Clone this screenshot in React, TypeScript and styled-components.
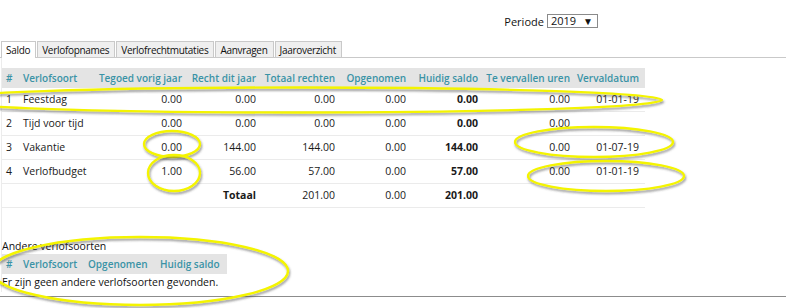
import React from "react";
import styled, { createGlobalStyle } from "styled-components";

const Global = createGlobalStyle`
  html, body { margin: 0; padding: 0; background: #fff; }
  body { font-family: "Open Sans", "Noto Sans", sans-serif; font-size: 10.5px; color: #111; }
`;

const Page = styled.div`
  position: relative;
  width: 786px;
  height: 308px;
  overflow: hidden;
  padding-top: 14px;
  box-sizing: border-box;
`;

const TopBar = styled.div`
  display: flex;
  justify-content: flex-end;
  align-items: center;
  gap: 3px;
  padding-right: 188px;
  height: 14px;
`;

const Label = styled.span`
  font-size: 11px;
`;

const SelectBox = styled.div`
  display: flex;
  align-items: center;
  gap: 7px;
  height: 12px;
  border: 1px solid #8a8a8a;
  padding: 0 4px 0 3px;
  font-size: 11px;
  line-height: 12px;
`;

const Arrow = styled.span`
  font-size: 10px;
`;

const TabBar = styled.div`
  display: flex;
  margin-top: 13px;
  height: 16px;
  border-bottom: 1px solid #c9c9c9;
  padding-left: 1px;
`;

const Tab = styled.div<{ $active?: boolean }>`
  display: flex;
  align-items: center;
  padding: 0 5px 0 4px;
  margin-right: 1px;
  box-sizing: border-box;
  border: 1px solid #c9c9c9;
  border-bottom: none;
  background: ${(p) => (p.$active ? "#fff" : "#efefef")};
  margin-bottom: ${(p) => (p.$active ? "-1px" : "0")};
  height: ${(p) => (p.$active ? "17px" : "16px")};
  font-size: 10px;
  letter-spacing: -0.3px;
  white-space: nowrap;
`;

const Panel = styled.div`
  margin-left: 1px;
  border-left: 1px solid #ececec;
  padding-top: 10px;
`;

const Table = styled.table<{ $w: number }>`
  width: ${(p) => p.$w}px;
  border-collapse: collapse;
  table-layout: fixed;
  white-space: nowrap;
`;

const Th = styled.th<{ $right?: boolean; $w: number }>`
  width: ${(p) => p.$w}px;
  height: 20px;
  padding: 0 ${(p) => (p.$right ? "6px" : "0")} 0 ${(p) => (p.$right ? "0" : "4px")};
  box-sizing: border-box;
  background: #e4e4e4;
  color: #3a93a6;
  font-weight: 600;
  font-size: 10px;
  text-align: ${(p) => (p.$right ? "right" : "left")};
  overflow: hidden;
`;

const Tr = styled.tr<{ $h: number }>`
  height: ${(p) => p.$h}px;
  border-bottom: 1px solid #ebebeb;
`;

const Td = styled.td<{ $right?: boolean; $bold?: boolean }>`
  padding: 0 ${(p) => (p.$right ? "6px" : "0")} 0 ${(p) => (p.$right ? "0" : "4px")};
  text-align: ${(p) => (p.$right ? "right" : "left")};
  font-weight: ${(p) => (p.$bold ? 700 : 400)};
  font-size: 10.5px;
  color: #1a1a1a;
`;

const SubTitle = styled.div`
  margin-top: 31px;
  height: 15px;
  line-height: 15px;
  font-size: 10.5px;
`;

const Empty = styled.div`
  height: 18px;
  line-height: 16px;
  font-size: 10.5px;
`;

const BottomRule = styled.div`
  position: absolute;
  left: 0;
  right: 0;
  top: 296px;
  border-top: 1px solid #8c8c8c;
`;

const Overlay = styled.svg`
  position: absolute;
  left: 0;
  top: 0;
  pointer-events: none;
`;

const cols = [
  { t: "#", w: 17, r: false },
  { t: "Verlofsoort", w: 75, r: false },
  { t: "Tegoed vorig jaar", w: 94, r: true },
  { t: "Recht dit jaar", w: 74, r: true },
  { t: "Totaal rechten", w: 79, r: true },
  { t: "Opgenomen", w: 71, r: true },
  { t: "Huidig saldo", w: 72, r: true },
  { t: "Te vervallen uren", w: 92, r: true },
  { t: "Vervaldatum", w: 69, r: true },
];

const subCols = [
  { t: "#", w: 17 },
  { t: "Verlofsoort", w: 65 },
  { t: "Opgenomen", w: 72 },
  { t: "Huidig saldo", w: 71 },
];

const rows = [
  ["1", "Feestdag", "0.00", "0.00", "0.00", "0.00", "0.00", "0.00", "01-01-19"],
  ["2", "Tijd voor tijd", "0.00", "0.00", "0.00", "0.00", "0.00", "0.00", ""],
  ["3", "Vakantie", "0.00", "144.00", "144.00", "0.00", "144.00", "0.00", "01-07-19"],
  ["4", "Verlofbudget", "1.00", "56.00", "57.00", "0.00", "57.00", "0.00", "01-01-19"],
];

const ellipses = [
  { cx: 300, cy: 100, rx: 362, ry: 12.5 },
  { cx: 172, cy: 144, rx: 28, ry: 13 },
  { cx: 174, cy: 173, rx: 26, ry: 18 },
  { cx: 594, cy: 142, rx: 79, ry: 15 },
  { cx: 606, cy: 176, rx: 78, ry: 15 },
  { cx: 140, cy: 271, rx: 148, ry: 34 },
];

const mainWidth = cols.reduce((s, c) => s + c.w, 0);
const subWidth = subCols.reduce((s, c) => s + c.w, 0);

export default function App() {
  return (
    <>
      <Global />
      <Page>
        <TopBar>
          <Label>Periode</Label>
          <SelectBox>
            <span>2019</span>
            <Arrow>▼</Arrow>
          </SelectBox>
        </TopBar>
        <TabBar>
          <Tab $active>Saldo</Tab>
          <Tab>Verlofopnames</Tab>
          <Tab>Verlofrechtmutaties</Tab>
          <Tab>Aanvragen</Tab>
          <Tab>Jaaroverzicht</Tab>
        </TabBar>
        <Panel>
          <Table $w={mainWidth}>
            <thead>
              <tr>
                {cols.map((c) => (
                  <Th key={c.t} $w={c.w} $right={c.r}>
                    {c.t}
                  </Th>
                ))}
              </tr>
            </thead>
            <tbody>
              {rows.map((r, i) => (
                <Tr key={r[0]} $h={i === 0 ? 23 : 24}>
                  {r.map((v, j) => (
                    <Td key={j} $right={j > 1} $bold={j === 6}>
                      {v}
                    </Td>
                  ))}
                </Tr>
              ))}
              <Tr $h={24}>
                <Td />
                <Td />
                <Td />
                <Td $right $bold>Totaal</Td>
                <Td $right>201.00</Td>
                <Td $right>0.00</Td>
                <Td $right $bold>201.00</Td>
                <Td />
                <Td />
              </Tr>
            </tbody>
          </Table>
          <SubTitle>Andere verlofsoorten</SubTitle>
          <Table $w={subWidth}>
            <thead>
              <tr>
                {subCols.map((c) => (
                  <Th key={c.t} $w={c.w}>
                    {c.t}
                  </Th>
                ))}
              </tr>
            </thead>
          </Table>
          <Empty>Er zijn geen andere verlofsoorten gevonden.</Empty>
        </Panel>
        <BottomRule />
        <Overlay width={786} height={308} viewBox="0 0 786 308">
          <defs>
            <filter id="sh" x="-10%" y="-50%" width="120%" height="200%">
              <feDropShadow dx="1" dy="2" stdDeviation="1.2" floodColor="#444" floodOpacity="0.55" />
            </filter>
          </defs>
          {ellipses.map((e, i) => (
            <ellipse
              key={i}
              cx={e.cx}
              cy={e.cy}
              rx={e.rx}
              ry={e.ry}
              fill="none"
              stroke="#f4f400"
              strokeWidth={2.4}
              filter="url(#sh)"
            />
          ))}
        </Overlay>
      </Page>
    </>
  );
}
